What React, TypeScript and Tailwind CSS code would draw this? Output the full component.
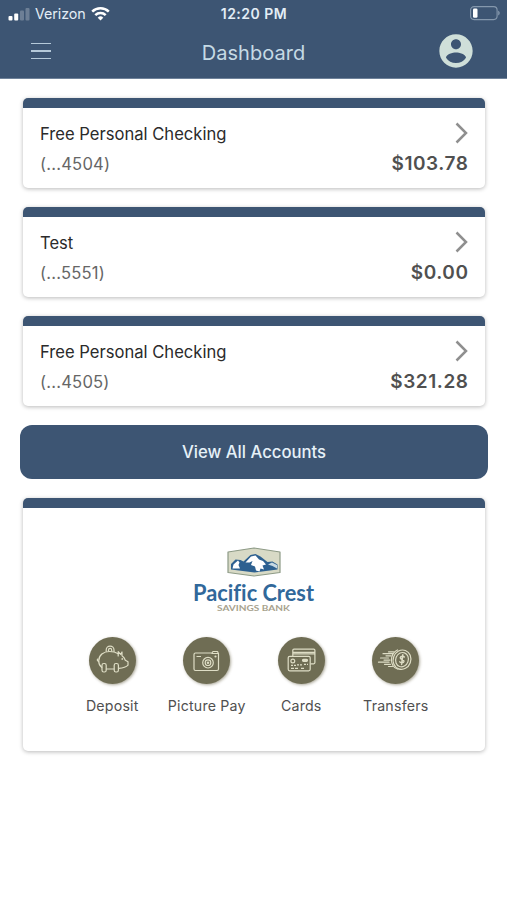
import React from 'react'

interface Account {
  name: string
  mask: string
  balance: string
}

const accounts: Account[] = [
  { name: 'Free Personal Checking', mask: '(...4504)', balance: '$103.78' },
  { name: 'Test', mask: '(...5551)', balance: '$0.00' },
  { name: 'Free Personal Checking', mask: '(...4505)', balance: '$321.28' },
]

const DepositIcon = () => (
  <svg className="w-[47px] h-[47px]" viewBox="0 0 47 47" fill="none" stroke="#deddc5" strokeWidth="1.2" strokeLinecap="round" strokeLinejoin="round">
    <path d="M17.2 14.300V13a3.900 3.900 0 0 1 7.800 0v1.300" />
    <path d="M19.500 14v-1a1.600 1.600 0 0 1 3.200 0v1" />
    <path d="M12.800 30.500C10.500 28.700 9.700 26.500 9.700 24c0-5.800 4.800-9.500 10.800-9.500 3.200 0 6.300.7 8.700 2.200" />
    <path d="M29.200 19v-4.300l2.500 2.600 1.300-2.300v3.700c1.700 1 2.700 2.600 3.300 4.500l2.700 1.600v3.400c-2 2.200-5.500 3-9.200 3.200" />
    <path d="M17.400 32h7.600" />
    <rect x="13" y="26.500" width="4.200" height="8.500" rx="1.800" />
    <rect x="25.200" y="26.500" width="4.200" height="8.500" rx="1.800" />
    <path d="M9.700 24.500c-1.300-.2-1.600-1.300-1.200-2.400" />
    <circle cx="33.300" cy="22" r=".3" />
  </svg>
)

const CameraIcon = () => (
  <svg className="w-[47px] h-[47px]" viewBox="0 0 47 47" fill="none" stroke="#deddc5" strokeWidth="1.2" strokeLinejoin="round">
    <path d="M12.500 16h16.500l1-1.500h4.500l1 2.200v15.300a1.500 1.500 0 0 1-1.500 1.500H12.500a1.500 1.500 0 0 1-1.500-1.500V17.500a1.500 1.500 0 0 1 1.500-1.500z" />
    <path d="M28.500 16.500h7M13.500 19.500h4.500" />
    <circle cx="25" cy="25.700" r="5.300" />
    <circle cx="25" cy="25.700" r="2.800" />
    <circle cx="25" cy="25.700" r=".7" />
    <circle cx="32.500" cy="19.500" r=".5" />
  </svg>
)

const CardsIcon = () => (
  <svg className="w-[47px] h-[47px]" viewBox="0 0 47 47" fill="none" stroke="#deddc5" strokeWidth="1.2" strokeLinejoin="round">
    <path d="M14.800 19v-5.700c0-.7.5-1.200 1.200-1.200h19.700c.7 0 1.200.5 1.200 1.200v12.300c0 .7-.5 1.200-1.200 1.200H32.500" />
    <path d="M15 15.300h22M15 16.900h22" />
    <rect x="10.200" y="19.300" width="22" height="14.500" rx="1.500" />
    <circle cx="14.800" cy="24" r="1.900" />
    <path d="M13 31.300h8M23 31.300h3" strokeDasharray="3 1" />
    <path d="M13 28.300h5M19 27.800h5M26 27.300h4" strokeDasharray="2 1" />
    <rect x="24.500" y="22.300" width="5" height="2" rx="1" fill="#deddc5" />
  </svg>
)

const TransferIcon = () => (
  <svg className="w-[47px] h-[47px]" viewBox="0 0 47 47" fill="none" stroke="#deddc5" strokeWidth="1.2" strokeLinecap="round">
    <ellipse cx="30" cy="22.700" rx="8.800" ry="9.800" transform="rotate(20 30 22.700)" />
    <ellipse cx="30" cy="22.700" rx="6.300" ry="7.300" transform="rotate(20 30 22.700)" />
    <path d="M25.500 13c-3.700 1.800-6 5.800-6 10 0 4.300 2.500 8 6.500 9.200" />
    <path d="M11 16.700h9.500M14 18.800h5M8.500 21h8M12 23.100h6M6.500 25.200h10.500M12.500 27.300h6M16.500 29.500h4M16.500 14.800h5" />
    <path d="M32.300 20c-.8-.9-3.600-1-4 .6-.4 2.200 4 1.600 3.600 3.900-.4 1.700-3.300 1.500-4.100.4M30.800 17.700l-1.200 9.700" strokeWidth="1.500" />
  </svg>
)

const actions = [
  { label: 'Deposit', Icon: DepositIcon },
  { label: 'Picture Pay', Icon: CameraIcon },
  { label: 'Cards', Icon: CardsIcon },
  { label: 'Transfers', Icon: TransferIcon },
]

const StatusBar = () => (
  <div className="h-[27px] grid grid-cols-3 items-center pl-2 pr-[7px] text-[#e3edf6]">
    <div className="flex items-center">
      <svg className="w-[22px] h-[14px] shrink-0" viewBox="0 0 22 14" fill="#fff">
        <rect x="0.500" y="9" width="4" height="4.500" rx="1" />
        <rect x="6.200" y="6.500" width="4" height="7" rx="1" />
        <rect x="12" y="3.500" width="4" height="10" rx="1" opacity=".25" />
        <rect x="17.500" y="1" width="4" height="12.500" rx="1" opacity=".25" />
      </svg>
      <span className="ml-[5px] text-[14.300px] tracking-[-0.100px]">Verizon</span>
      <svg className="w-[19px] h-[14px] ml-[5px] shrink-0" viewBox="0 0 19 14" fill="none" stroke="#fff" strokeWidth="2.500">
        <path d="M1.200 4.700a11.800 11.800 0 0 1 16.600 0" />
        <path d="M4.300 8.100a7.400 7.400 0 0 1 10.400 0" />
        <path d="M9.500 13.500L6.700 10.700a4 4 0 0 1 5.600 0z" fill="#fff" stroke="none" />
      </svg>
    </div>
    <span className="text-center text-[14px] font-semibold tracking-[0.500px]">12:20 PM</span>
    <svg className="w-[31px] h-[15px] justify-self-end" viewBox="0 0 31 15">
      <rect x="1.600" y=".6" width="26.500" height="13" rx="3.500" fill="none" stroke="#8598ad" strokeWidth="1.100" />
      <rect x="4" y="2.500" width="4.500" height="9.200" rx="1.300" fill="#fff" />
      <path d="M29.200 4.800v4.600c1-.4 1.500-1.200 1.500-2.300s-.5-1.900-1.500-2.300z" fill="#8598ad" />
    </svg>
  </div>
)

const Header = () => (
  <header className="h-[79px] bg-[#3d5573] border-b border-[#6f829a]">
    <StatusBar />
    <div className="h-[50px] grid grid-cols-3 items-center pl-[31px] pr-[31px]">
      <button className="w-5 flex flex-col gap-[6px] -mt-[2px]" aria-label="Menu">
        <span className="h-[1.500px] bg-[#b5c9d9]" />
        <span className="h-[1.500px] bg-[#b5c9d9]" />
        <span className="h-[1.500px] bg-[#b5c9d9]" />
      </button>
      <h1 className="text-center text-[20px] tracking-[0.050px] leading-none pt-px text-[#c5dae5]">Dashboard</h1>
      <svg className="w-10 h-10 -mt-[2px] justify-self-end" viewBox="0 0 24 24" fill="#cfdfd9">
        <path d="M12 2C6.480 2 2 6.480 2 12s4.480 10 10 10 10-4.480 10-10S17.520 2 12 2zm0 3c1.660 0 3 1.340 3 3s-1.340 3-3 3-3-1.340-3-3 1.340-3 3-3zm0 14.200c-2.500 0-4.710-1.280-6-3.220.03-1.990 4-3.080 6-3.080 1.990 0 5.970 1.090 6 3.080-1.290 1.940-3.500 3.220-6 3.220z" />
      </svg>
    </div>
  </header>
)

const AccountCard: React.FC<{ account: Account }> = ({ account }) => (
  <div className="h-[90px] rounded-[5px] bg-white border-t-[10px] border-[#3d5573] shadow-[0_1px_4px_rgba(0,0,0,0.280)] px-[17px] pt-[14px]">
    <div className="flex items-center justify-between h-[22px]">
      <span className="pt-[2px] text-[16.600px] text-[#2b2b2b]">{account.name}</span>
      <svg className="w-[14px] h-[22px]" viewBox="0 0 14 22" fill="none" stroke="#8f8f8f" strokeWidth="2.500">
        <path d="M2.500 1.500l9.500 9.500L2.500 20.500" />
      </svg>
    </div>
    <div className="flex items-center justify-between h-[22px] mt-[9px]">
      <span className="pt-px text-[16.600px] tracking-[0.200px] text-[#666]">{account.mask}</span>
      <span className="text-[19px] tracking-[0.550px] -mr-[0.500px] font-semibold text-[#505050]">{account.balance}</span>
    </div>
  </div>
)

const BankLogo = () => (
  <svg className="w-[124px] h-[70px]" viewBox="0 0 124 70">
    <path d="M36 6L62 2l26 4v20.500L62 30l-26-3.500z" fill="#d8dac6" stroke="#8d9a86" strokeWidth="1.200" strokeLinejoin="round" />
    <path d="M39 23.500v-5.500l4.500-4.500 5 .5 3 1.500 7-6.500 5-1 5 2.500 7 5.500 5-.5 5 3v5l-23 3z" fill="#2d6090" />
    <path d="M40.500 22.500l1-4 4.500-4 1.500 2-1 2.500 1.500 3.500zM53.500 16.500l5.500-6 4.500-1 3.500 4 4 1.500 3 3.500-3.500 1 1.500 4-3.500-1-1 3-3.500-1-1-4-4-1.500 1.500-4-3 1.500z" fill="#fff" />
    <path d="M76 18.500l4-2 5 2.500v3.500l-4.500-2.500z" fill="#c6d8e2" />
    <text x="1" y="55" textLength="121" lengthAdjust="spacingAndGlyphs" fontFamily="Lato, sans-serif" fontWeight="700" fontSize="22" fill="#31689a" className="[font-variant-ligatures:none]">Pacific Crest</text>
    <text x="25" y="65" textLength="73" lengthAdjust="spacingAndGlyphs" fontFamily="Lato, sans-serif" fontWeight="700" fontSize="8.300" fill="#a8a28e">SAVINGS BANK</text>
  </svg>
)

export default function App() {
  return (
    <div className="w-full h-[900px] bg-white font-['Inter',sans-serif]">
      <Header />
      <main className="pl-[23px] pr-[22px] pt-[19px]">
        <div className="flex flex-col gap-[19px]">
          {accounts.map((account) => (
            <AccountCard key={account.mask} account={account} />
          ))}
        </div>

        <button className="block h-[54px] w-[468px] -ml-[3px] mt-[19px] pt-[2px] rounded-[12px] bg-[#3d5573] text-[#e6f1f8] text-[16.700px] font-medium">
          View All Accounts
        </button>

        <section className="mt-[19px] h-[253px] rounded-[5px] bg-white border-t-[10px] border-[#3d5573] shadow-[0_1px_4px_rgba(0,0,0,0.280)] pt-[38px] flex flex-col items-center">
          <BankLogo />
          <div className="grid grid-cols-4 w-[378px] mt-[21px]">
            {actions.map(({ label, Icon }) => (
              <button key={label} className="flex flex-col items-center">
                <span className="rounded-full bg-[#6f6d54] shadow-[1px_1px_3px_rgba(70,65,30,0.450)]">
                  <Icon />
                </span>
                <span className="mt-[12px] text-[14.200px] leading-5 tracking-[0.200px] whitespace-nowrap text-[#505050]">{label}</span>
              </button>
            ))}
          </div>
        </section>
      </main>
    </div>
  )
}
